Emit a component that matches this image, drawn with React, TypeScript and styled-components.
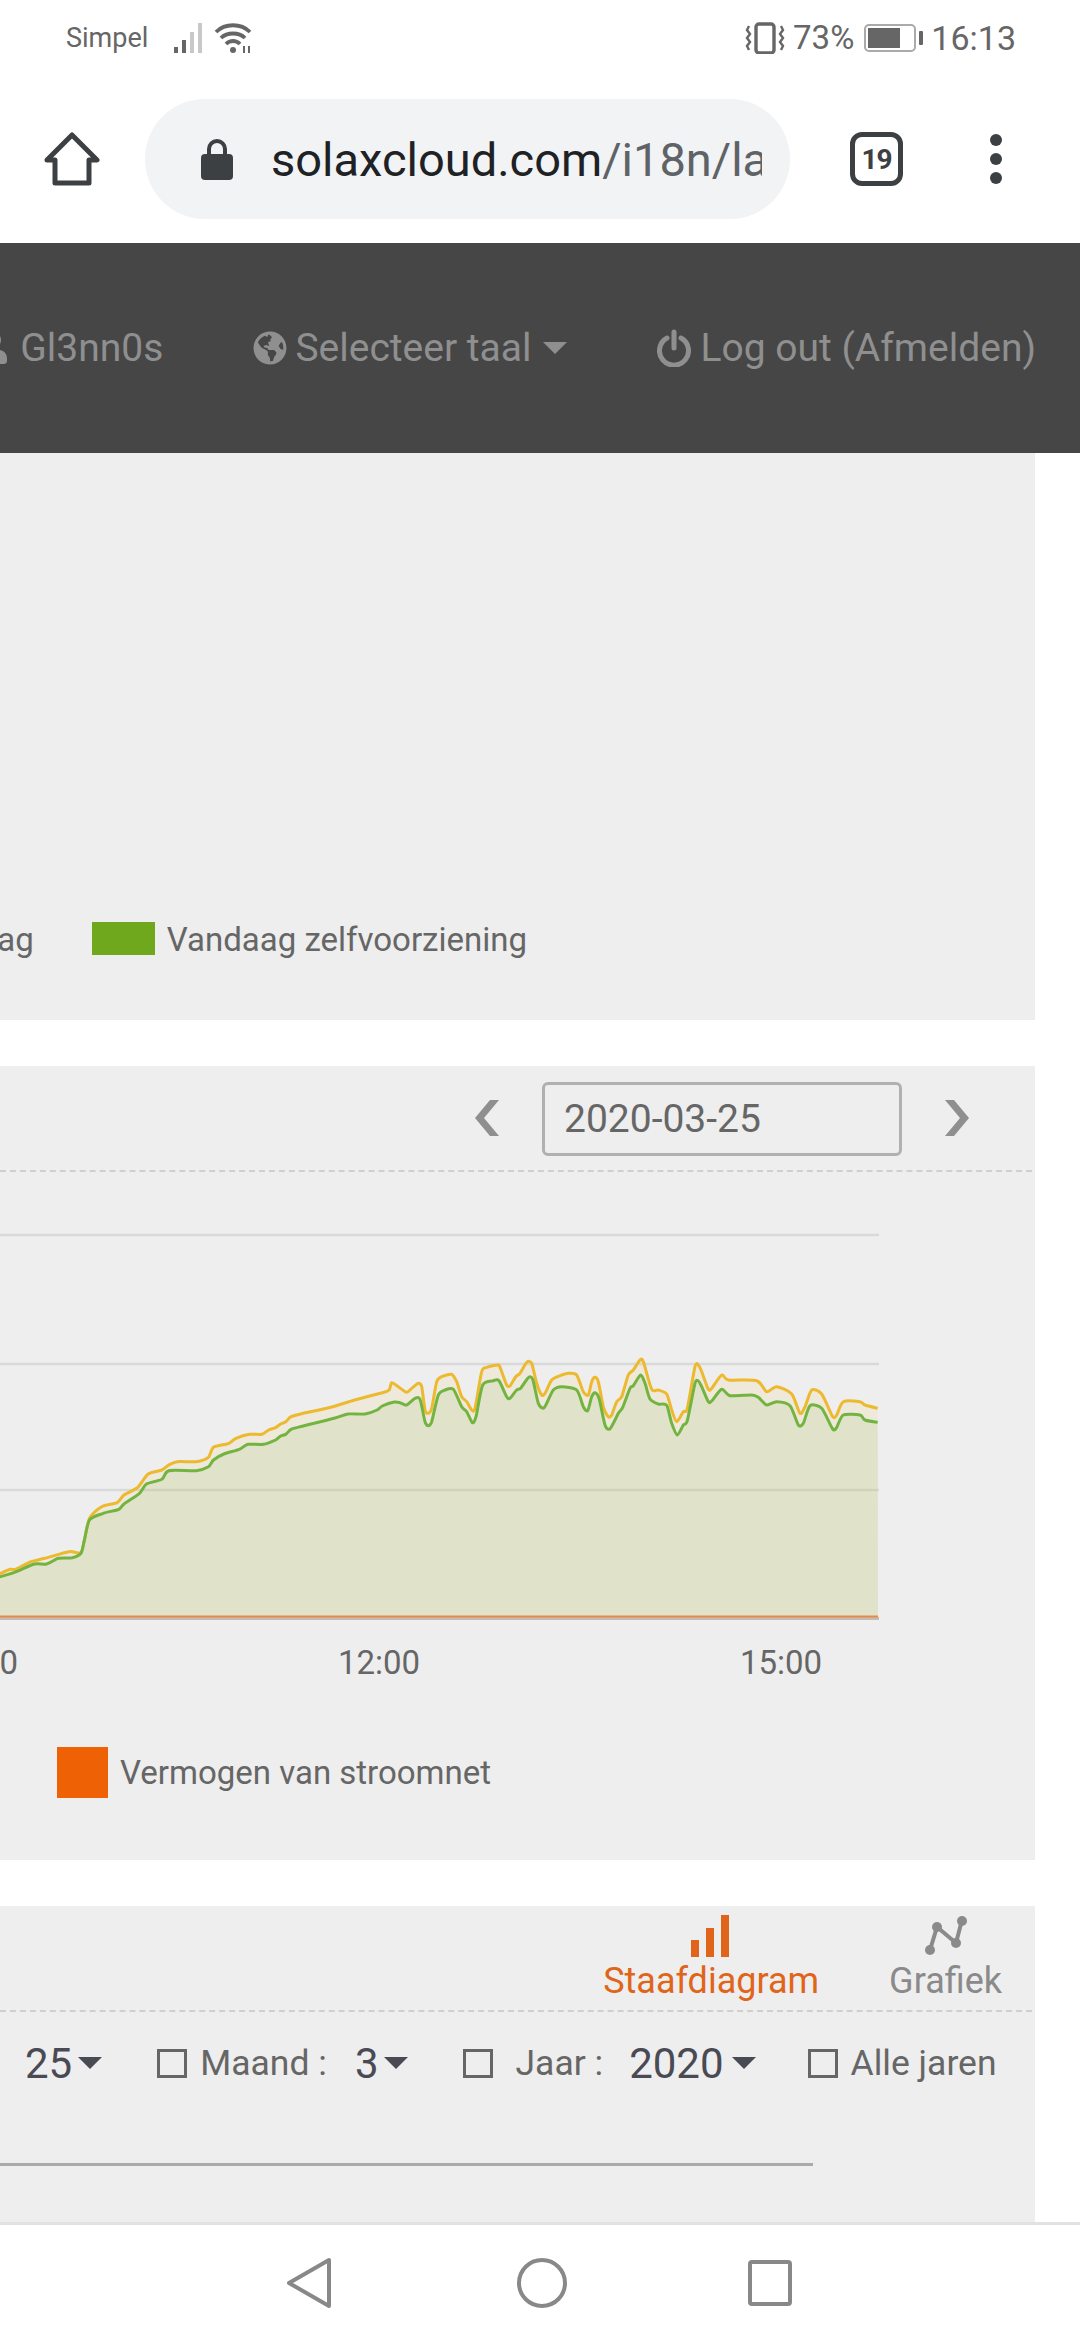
import React from 'react';
import styled, { createGlobalStyle } from 'styled-components';
import { FaGlobeAmericas, FaUser } from 'react-icons/fa';

// chart points were read off the reference, in two crops with different scales
const left = (pts: number[][]) => pts.map(([x, y]) => [x / 2.9037, 1200 + y / 3]);
const right = (pts: number[][]) => pts.map(([x, y]) => [400 + x / 3, 1320 + y / 3]);

const yellowLine = [
    ...left([
        [-10, 1125], [30, 1108], [45, 1108], [90, 1085], [130, 1075], [200, 1055], [235, 1058], [245, 1020], [260, 955],
        [295, 920], [340, 908], [360, 885], [400, 862], [430, 822], [470, 810], [490, 795], [515, 785], [570, 785],
        [605, 772], [620, 742], [665, 730], [685, 715], [725, 703], [760, 703], [780, 690], [800, 683], [815, 672],
        [830, 665], [845, 650], [880, 640], [960, 622], [1030, 600], [1110, 578], [1130, 570],
    ]),
    ...right([
        [-25, 188], [-5, 200], [20, 217], [35, 205], [55, 190], [65, 200], [75, 270], [85, 280], [95, 265], [110, 185], [125, 170],
        [155, 163], [170, 185], [185, 230], [200, 245], [215, 270], [225, 265], [245, 155], [260, 142], [295, 135],
        [305, 155], [320, 195], [330, 198], [347, 170], [360, 160], [380, 127], [395, 130], [410, 190], [425, 225],
        [435, 220], [455, 180], [480, 167], [505, 160], [530, 165], [550, 215], [565, 225], [575, 185], [585, 172],
        [595, 185], [610, 260], [625, 290], [635, 285], [650, 245], [665, 230], [685, 165], [700, 150], [720, 120],
        [730, 125], [755, 208], [775, 210], [800, 222], [815, 270], [830, 305], [850, 275], [862, 265], [885, 140],
        [895, 135], [905, 155], [925, 208], [935, 205], [965, 165], [985, 180], [1070, 182], [1100, 215], [1130, 200],
        [1175, 222], [1200, 280], [1215, 260], [1235, 210], [1265, 222], [1298, 290], [1310, 285], [1330, 245],
        [1380, 245], [1395, 255], [1433, 265],
    ]),
];

const greenLine = [
    ...left([
        [-10, 1133], [40, 1118], [100, 1092], [135, 1092], [170, 1075], [210, 1073], [235, 1060], [245, 1020], [260, 960],
        [300, 940], [345, 928], [360, 912], [405, 880], [425, 852], [470, 838], [490, 812], [570, 812], [605, 800],
        [620, 780], [650, 762], [695, 748], [720, 733], [765, 733], [800, 720], [815, 708], [830, 703], [845, 688],
        [880, 678], [970, 655], [1010, 642], [1060, 642], [1095, 630], [1110, 618], [1145, 606],
    ]),
    ...right([
        [0, 248], [20, 255], [45, 235], [60, 238], [75, 305], [85, 317], [95, 305], [115, 225], [135, 210], [160, 208],
        [185, 260], [200, 275], [217, 308], [228, 290], [248, 195], [280, 182], [297, 182], [320, 230], [330, 235],
        [350, 210], [362, 205], [385, 173], [398, 178], [415, 250], [430, 265], [440, 250], [460, 210], [485, 200],
        [530, 210], [550, 260], [563, 272], [575, 230], [585, 218], [597, 235], [615, 315], [628, 328], [640, 310],
        [655, 280], [668, 262], [690, 205], [700, 197], [722, 165], [735, 190], [750, 237], [775, 252], [800, 256],
        [815, 310], [832, 345], [850, 315], [862, 302], [885, 190], [895, 183], [905, 200], [925, 245], [935, 243],
        [965, 208], [990, 227], [1055, 225], [1075, 232], [1100, 255], [1130, 245], [1170, 257], [1195, 315],
        [1210, 310], [1230, 257], [1265, 265], [1298, 327], [1310, 322], [1330, 285], [1380, 285], [1395, 300],
        [1433, 307],
    ]),
];

// catmull-rom to bezier, so the line keeps the soft look of the chart library
const smooth = (pts: number[][]) => {
    let d = `M${pts[0][0].toFixed(1)} ${pts[0][1].toFixed(1)}`;
    for (let i = 0; i < pts.length - 1; i++) {
        const p0 = pts[Math.max(i - 1, 0)];
        const p1 = pts[i];
        const p2 = pts[i + 1];
        const p3 = pts[Math.min(i + 2, pts.length - 1)];
        const c1x = p1[0] + (p2[0] - p0[0]) / 8;
        const c1y = p1[1] + (p2[1] - p0[1]) / 8;
        const c2x = p2[0] - (p3[0] - p1[0]) / 8;
        const c2y = p2[1] - (p3[1] - p1[1]) / 8;
        d += `C${c1x.toFixed(1)} ${c1y.toFixed(1)} ${c2x.toFixed(1)} ${c2y.toFixed(1)} ${p2[0].toFixed(1)} ${p2[1].toFixed(1)}`;
    }
    return d;
};

const yellowPath = smooth(yellowLine);
const greenPath = smooth(greenLine);
const closeArea = 'L878 1616L-4 1616Z';

const App = () => {
    return (
        <Page>
            <GlobalStyle />
            <StatusBar>
                <StatusGroup>
                    <Carrier>Simpel</Carrier>
                    <svg width="36" height="32" viewBox="0 0 36 32">
                        <rect x="1" y="25" width="4" height="6" fill="#666" />
                        <rect x="9" y="18" width="4" height="13" fill="#666" />
                        <rect x="17" y="10" width="4" height="21" fill="#c8c8c8" />
                        <rect x="25" y="1" width="4" height="30" fill="#c8c8c8" />
                    </svg>
                    <WifiIcon width="40" height="32" viewBox="0 0 40 32" fill="none" stroke="#666" strokeWidth="3.8">
                        <path d="M2 10 C11 1 27 1 36 10" />
                        <path d="M7 16 C13 10 25 10 31 16" />
                        <path d="M12 22 C16 18 22 18 26 22" />
                        <circle cx="19" cy="28" r="3" fill="#666" stroke="none" />
                        <path d="M30 24 v7 M35 24 v7" strokeWidth="2" />
                    </WifiIcon>
                </StatusGroup>
                <StatusGroup>
                    <svg width="40" height="32" viewBox="0 0 40 32" fill="none" stroke="#666">
                        <rect x="11" y="2" width="18" height="29" rx="3" strokeWidth="3.4" />
                        <path d="M4 4 l-2 4 l3 4 l-3 4 l3 4 l-3 4 l2 4 M36 4 l2 4 l-3 4 l3 4 l-3 4 l3 4 l-2 4" strokeWidth="2.4" />
                    </svg>
                    <StatusText>73%</StatusText>
                    <Battery>
                        <BatteryLevel $level={73} />
                    </Battery>
                    <BatteryTip />
                    <Clock>16:13</Clock>
                </StatusGroup>
            </StatusBar>

            <Toolbar>
                <svg width="56" height="56" viewBox="0 0 56 56" fill="none" stroke="#3c4043" strokeWidth="5" strokeLinejoin="round">
                    <path d="M3 29 L28 4 L53 29 H45 V52 H11 V29 Z" />
                </svg>
                <AddressBar>
                    <svg width="34" height="44" viewBox="0 0 34 44">
                        <path d="M9 18 V12 a8 8 0 0 1 16 0 V18" fill="none" stroke="#3c4043" strokeWidth="4" />
                        <rect x="1" y="17" width="32" height="26" rx="4" fill="#3c4043" />
                    </svg>
                    <Url>
                        <UrlHost>solaxcloud.com</UrlHost>/i18n/la
                    </Url>
                </AddressBar>
                <TabCount>19</TabCount>
                <MenuDots>
                    <Dot />
                    <Dot />
                    <Dot />
                </MenuDots>
            </Toolbar>

            <NavBar>
                <NavItem $gap={11}>
                    <FaUser size={32} />
                    Gl3nn0s
                </NavItem>
                <NavItem $gap={8}>
                    <FaGlobeAmericas size={34} />
                    Selecteer taal
                    <NavCaret />
                </NavItem>
                <NavItem $gap={10}>
                    <svg width="34" height="38" viewBox="0 0 34 38" fill="none" stroke="#8f8f8f" strokeWidth="5" strokeLinecap="round">
                        <path d="M10 9 a14.5 14.5 0 1 0 14 0" />
                        <path d="M17 3 V19" />
                    </svg>
                    Log out (Afmelden)
                </NavItem>
            </NavBar>

            <Content>
                <Panel $height={567}>
                    <TopLegend>
                        <LegendText>Vandaag</LegendText>
                        <GreenSwatch />
                        <LegendText>Vandaag zelfvoorziening</LegendText>
                    </TopLegend>
                </Panel>

                <Panel $height={794}>
                    <PanelHead $align="center" $pad={62} $gap={42}>
                        <svg width="26" height="36" viewBox="0 0 26 36" fill="#8f8f8f">
                            <path d="M25 0 L10 18 L25 36 H16 L1 18 L16 0 Z" />
                        </svg>
                        <DateInput>2020-03-25</DateInput>
                        <svg width="26" height="36" viewBox="0 0 26 36" fill="#8f8f8f">
                            <path d="M1 0 L16 18 L1 36 H10 L25 18 L10 0 Z" />
                        </svg>
                    </PanelHead>
                    <ChartSvg viewBox="0 1172 1035 524" width="1035" height="524">
                        <g stroke="#d9d9d9" strokeWidth="2.5">
                            <line x1="0" x2="879" y1="1235" y2="1235" />
                            <line x1="0" x2="879" y1="1364" y2="1364" />
                            <line x1="0" x2="879" y1="1490" y2="1490" />
                        </g>
                        <path d={yellowPath + closeArea} fill="rgba(245,200,60,0.1)" />
                        <path d={greenPath + closeArea} fill="rgba(115,179,63,0.11)" />
                        <line x1="0" x2="879" y1="1618.5" y2="1618.5" stroke="#c4bcb4" strokeWidth="3" />
                        <line x1="0" x2="878" y1="1616.5" y2="1616.5" stroke="#e8894a" strokeWidth="2" />
                        <path d={yellowPath} fill="none" stroke="#ecb92f" strokeWidth="3" strokeLinejoin="round" />
                        <path d={greenPath} fill="none" stroke="#73b440" strokeWidth="3" strokeLinejoin="round" />
                        <AxisLabel x="-23" y="1674">09:00</AxisLabel>
                        <AxisLabel x="379" y="1674">12:00</AxisLabel>
                        <AxisLabel x="781" y="1674">15:00</AxisLabel>
                    </ChartSvg>
                    <GridLegend>
                        <OrangeSwatch />
                        <LegendText>Vermogen van stroomnet</LegendText>
                    </GridLegend>
                </Panel>

                <BottomPanel>
                    <PanelHead $align="flex-start" $pad={30} $gap={70}>
                        <ChartTab $active>
                            <svg width="42" height="44" viewBox="0 0 42 44" fill="#e0641a">
                                <rect x="1" y="26" width="8" height="17" />
                                <rect x="16" y="14" width="8" height="29" />
                                <rect x="31" y="1" width="8" height="42" />
                            </svg>
                            Staafdiagram
                        </ChartTab>
                        <ChartTab>
                            <svg width="44" height="44" viewBox="0 -4 44 44" fill="#8a8a8a" stroke="#8a8a8a" strokeWidth="4">
                                <path d="M6 32 L13 9 L32 25 L38 2" fill="none" />
                                <circle cx="6" cy="32" r="5" stroke="none" />
                                <circle cx="13" cy="9" r="5" stroke="none" />
                                <circle cx="32" cy="25" r="5" stroke="none" />
                                <circle cx="38" cy="3" r="5" stroke="none" />
                            </svg>
                            Grafiek
                        </ChartTab>
                    </PanelHead>
                    <FilterRow>
                        <FilterValue>25</FilterValue>
                        <SelectCaret $left={6} />
                        <CheckBox $left={55} />
                        <FilterLabel $left={13}>Maand :</FilterLabel>
                        <FilterValue $left={28}>3</FilterValue>
                        <SelectCaret $left={6} />
                        <CheckBox $left={55} />
                        <FilterLabel $left={22}>Jaar :</FilterLabel>
                        <FilterValue $left={26}>2020</FilterValue>
                        <SelectCaret $left={8} />
                        <CheckBox $left={52} />
                        <FilterLabel $left={13}>Alle jaren</FilterLabel>
                    </FilterRow>
                    <TableRule />
                </BottomPanel>
            </Content>

            <SystemNav>
                <svg width="46" height="52" viewBox="0 0 46 52" fill="none" stroke="#888" strokeWidth="4" strokeLinejoin="round">
                    <path d="M43 3 V49 L3 26 Z" />
                </svg>
                <svg width="52" height="52" viewBox="0 0 52 52" fill="none" stroke="#888" strokeWidth="4">
                    <circle cx="26" cy="26" r="23" />
                </svg>
                <svg width="46" height="48" viewBox="0 0 46 48" fill="none" stroke="#888" strokeWidth="4">
                    <rect x="3" y="3" width="40" height="42" rx="2" />
                </svg>
            </SystemNav>
        </Page>
    );
};

export default App;

const GlobalStyle = createGlobalStyle`
    html, body {
        margin: 0;
        padding: 0;
        background: #fff;
    }
    body {
        font-family: Roboto, "Liberation Sans", sans-serif;
    }
`;

const Page = styled.div`
    width: 1080px;
    height: 2340px;
    display: flex;
    flex-direction: column;
    overflow: hidden;
    background: #fff;
`;

const StatusBar = styled.div`
    height: 75px;
    flex-shrink: 0;
    display: flex;
    align-items: center;
    justify-content: space-between;
    padding: 0 64px 0 66px;
    color: #666;
`;

const StatusGroup = styled.div`
    display: flex;
    align-items: center;
`;

const Carrier = styled.span`
    font-size: 27px;
    margin-right: 25px;
`;

const WifiIcon = styled.svg`
    margin-left: 5px;
`;

const StatusText = styled.span`
    font-size: 33px;
    margin-left: 8px;
`;

const Battery = styled.div`
    width: 52px;
    height: 28px;
    margin-left: 10px;
    box-sizing: border-box;
    border: 2px solid #aaa;
    border-radius: 5px;
    padding: 2px;
`;

const BatteryLevel = styled.div<{ $level: number }>`
    height: 100%;
    width: ${(props) => props.$level}%;
    background: #666;
`;

const BatteryTip = styled.div`
    width: 4px;
    height: 14px;
    margin-left: 3px;
    background: #666;
    border-radius: 1px;
`;

const Clock = styled.span`
    font-size: 34px;
    margin-left: 8px;
`;

const Toolbar = styled.div`
    height: 168px;
    flex-shrink: 0;
    display: flex;
    align-items: center;
    padding-left: 44px;
`;

const AddressBar = styled.div`
    width: 645px;
    height: 120px;
    margin-left: 45px;
    box-sizing: border-box;
    padding: 0 28px 0 55px;
    border-radius: 60px;
    background: #f1f3f4;
    display: flex;
    align-items: center;
    gap: 37px;
`;

const Url = styled.div`
    flex: 1;
    min-width: 0;
    overflow: hidden;
    white-space: nowrap;
    font-size: 47px;
    color: #5f6368;
`;

const UrlHost = styled.span`
    color: #202124;
`;

const TabCount = styled.div`
    width: 53px;
    height: 54px;
    margin-left: 60px;
    box-sizing: border-box;
    border: 5px solid #3c4043;
    border-radius: 12px;
    display: flex;
    align-items: center;
    justify-content: center;
    font-size: 28px;
    font-weight: 700;
    letter-spacing: -1px;
    color: #3c4043;
`;

const MenuDots = styled.div`
    margin-left: 87px;
    display: flex;
    flex-direction: column;
    gap: 7px;
`;

const Dot = styled.span`
    width: 12px;
    height: 12px;
    border-radius: 50%;
    background: #3c4043;
`;

const NavBar = styled.div`
    height: 210px;
    flex-shrink: 0;
    box-sizing: border-box;
    background: #464646;
    display: flex;
    align-items: center;
    justify-content: flex-end;
    padding-right: 44px;
    gap: 90px;
    color: #8f8f8f;
    font-size: 39px;
    white-space: nowrap;
`;

const NavItem = styled.div<{ $gap: number }>`
    display: flex;
    align-items: center;
    flex-shrink: 0;
    gap: ${(props) => props.$gap}px;
`;

const NavCaret = styled.span`
    width: 0;
    height: 0;
    margin-left: 3px;
    border-left: 12px solid transparent;
    border-right: 12px solid transparent;
    border-top: 12px solid #8f8f8f;
`;

const Content = styled.div`
    flex: 1;
    min-height: 0;
    display: flex;
    flex-direction: column;
    gap: 46px;
    overflow: hidden;
`;

const Panel = styled.section<{ $height: number }>`
    width: 1035px;
    height: ${(props) => props.$height}px;
    flex-shrink: 0;
    background: #eee;
    position: relative;
`;

const BottomPanel = styled.section`
    width: 1035px;
    flex: 1;
    min-height: 0;
    background: #eee;
`;

const TopLegend = styled.div`
    width: 527px;
    height: 100%;
    box-sizing: border-box;
    padding-top: 469px;
    display: flex;
    align-items: flex-start;
    justify-content: flex-end;
    overflow: hidden;
    white-space: nowrap;
`;

const LegendText = styled.span`
    flex-shrink: 0;
    font-size: 33px;
    line-height: 36px;
    color: #666;
`;

const GreenSwatch = styled.span`
    width: 63px;
    height: 33px;
    flex-shrink: 0;
    margin: 0 12px 0 58px;
    background: #6fa81c;
`;

const PanelHead = styled.div<{ $align: string; $pad: number; $gap: number }>`
    height: 106px;
    box-sizing: border-box;
    width: 1032px;
    border-bottom: 2px dashed #cfcfcf;
    display: flex;
    align-items: ${(props) => props.$align};
    justify-content: flex-end;
    padding-right: ${(props) => props.$pad}px;
    gap: ${(props) => props.$gap}px;
`;

const DateInput = styled.div`
    width: 360px;
    height: 74px;
    margin-top: 2px;
    box-sizing: border-box;
    border: 3px solid #b0b0b0;
    border-radius: 6px;
    padding-left: 19px;
    display: flex;
    align-items: center;
    font-size: 39px;
    color: #666;
`;

const ChartSvg = styled.svg`
    display: block;
`;

const AxisLabel = styled.text`
    font-size: 33px;
    fill: #666;
    text-anchor: middle;
`;

const GridLegend = styled.div`
    margin-top: 51px;
    padding-left: 57px;
    display: flex;
    align-items: center;
    gap: 12px;
`;

const OrangeSwatch = styled.span`
    width: 51px;
    height: 51px;
    background: #ee6205;
`;

const ChartTab = styled.div<{ $active?: boolean }>`
    padding-top: 8px;
    display: flex;
    flex-direction: column;
    align-items: center;
    font-size: 36px;
    line-height: 46px;
    color: ${(props) => (props.$active ? '#e0641a' : '#8a8a8a')};
`;

const FilterRow = styled.div`
    display: flex;
    align-items: center;
    height: 102px;
    padding-left: 25px;
    font-size: 35.5px;
    white-space: nowrap;
`;

const FilterValue = styled.span<{ $left?: number }>`
    font-size: 42px;
    color: #4a4a55;
    margin-left: ${(props) => props.$left || 0}px;
`;

const FilterLabel = styled.span<{ $left: number }>`
    color: #666;
    margin-left: ${(props) => props.$left}px;
`;

const SelectCaret = styled.span<{ $left: number }>`
    width: 0;
    height: 0;
    margin-left: ${(props) => props.$left}px;
    border-left: 12px solid transparent;
    border-right: 12px solid transparent;
    border-top: 12px solid #4a4a55;
`;

const CheckBox = styled.span<{ $left: number }>`
    width: 30px;
    height: 29px;
    box-sizing: border-box;
    margin-left: ${(props) => props.$left}px;
    border: 3px solid #666;
`;

const TableRule = styled.div`
    width: 813px;
    height: 3px;
    margin-top: 49px;
    background: #aaa;
`;

const SystemNav = styled.div`
    height: 118px;
    flex-shrink: 0;
    box-sizing: border-box;
    border-top: 3px solid #e2e2e2;
    background: #fff;
    display: grid;
    grid-template-columns: 230px 231px 46px;
    align-items: center;
    padding-left: 286px;
`;
